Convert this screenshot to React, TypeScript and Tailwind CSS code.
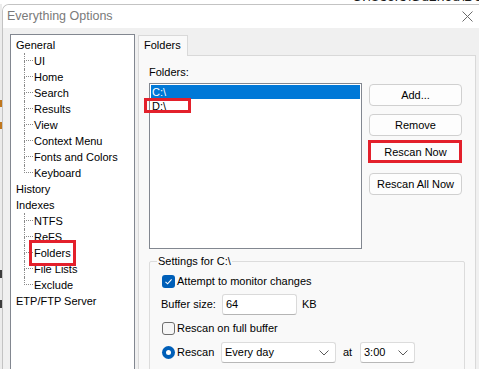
import React from 'react'

const font = "font-['Liberation_Sans',Arial,sans-serif]"

const generalChildren = ['UI', 'Home', 'Search', 'Results', 'View', 'Context Menu', 'Fonts and Colors', 'Keyboard']
const indexChildren = ['NTFS', 'ReFS', 'Folders', 'File Lists', 'Exclude']

const TreeRoot = ({ label }: { label: string }) => (
    <div className="h-[16px] leading-[16px] whitespace-nowrap">{label}</div>
)

const TreeChild = ({ label, last }: { label: string, last?: boolean }) => (
    <div className="flex h-[16px]">
        <div className="w-[8px] shrink-0" />
        <div className="w-[9px] shrink-0 flex flex-col">
            <div className="h-[8px] border-l border-b border-dotted border-[#8a8a8a]" />
            <div className={last ? 'h-[8px]' : 'h-[8px] border-l border-dotted border-[#8a8a8a]'} />
        </div>
        <span className="ml-[1px] leading-[16px] whitespace-nowrap">{label}</span>
    </div>
)

const Btn = ({ label, className }: { label: string, className?: string }) => (
    <button className={`h-[22px] w-[93px] rounded-[4px] border border-[#d0d0d0] bg-[#fdfdfd] text-[11px] text-black ${className ?? ''}`}>
        {label}
    </button>
)

const Chevron = () => (
    <svg width="10" height="6" viewBox="0 0 10 6" className="shrink-0">
        <path d="M0.5 0.5 L5 5 L9.5 0.5" fill="none" stroke="#5a5a5a" strokeWidth="1" />
    </svg>
)

const Select = ({ value, width }: { value: string, width: string }) => (
    <div className={`${width} h-[21px] flex items-center justify-between pl-[3px] pr-[6px] bg-white border border-[#dcdcdc] border-b-[#b8b8b8] rounded-[3px]`}>
        <span>{value}</span>
        <Chevron />
    </div>
)

export default function App() {
    return (
        <div className={`relative w-[479px] h-[369px] overflow-hidden bg-white text-[11px] text-black ${font}`}>
            {/* text of the window behind */}
            <div className="h-[4px] overflow-hidden bg-white">
                <div className="pl-[352px] -mt-[12px] text-[14px] leading-[16px] text-[#1a1a1a] whitespace-nowrap">
                    {'C:\\Users\\Gu2hou\\Dow'}
                </div>
            </div>
            <div className="flex h-[365px]">
                <div className="w-[2px] shrink-0 bg-[#ececec] flex flex-col">
                    <div className="h-[96px]" />
                    <div className="h-[7px] bg-[#c0771e]" />
                    <div className="h-[15px]" />
                    <div className="h-[7px] bg-[#c0771e]" />
                    <div className="h-[141px]" />
                    <div className="h-[8px] bg-[#3c3c3c]" />
                    <div className="h-[22px]" />
                    <div className="h-[8px] bg-[#3c3c3c]" />
                </div>
                <div className="flex-1 flex flex-col border-l border-t border-[#c3c3c3] rounded-tl-[7px] overflow-hidden">
                    {/* title bar */}
                    <div className="h-[23px] shrink-0 bg-white flex items-center justify-between pl-[4px] pr-[6px]">
                        <span className="text-[12.5px] text-[#7a7a7a]">Everything Options</span>
                        <svg width="11" height="11" viewBox="0 0 11 11">
                            <path d="M0.5 0.5 L10.5 10.5 M10.5 0.5 L0.5 10.5" stroke="#6b6b6b" strokeWidth="1" />
                        </svg>
                    </div>
                    {/* body */}
                    <div className="flex-1 bg-[#f0f0f0] flex pt-[6px] pl-[7px] pr-[3px] gap-[3px]">
                        <div className="w-[125px] shrink-0 bg-white border border-[#828790] pt-[2px] pl-[5px]">
                            <TreeRoot label="General" />
                            {generalChildren.map((c, i) => (
                                <TreeChild key={c} label={c} last={i === generalChildren.length - 1} />
                            ))}
                            <TreeRoot label="History" />
                            <TreeRoot label="Indexes" />
                            {indexChildren.map((c, i) => (
                                <TreeChild key={c} label={c} last={i === indexChildren.length - 1} />
                            ))}
                            <TreeRoot label="ETP/FTP Server" />
                        </div>
                        <div className="flex-1 flex flex-col pt-[1px]">
                            <div className="flex">
                                <div className="relative z-10 -mb-px w-[50px] h-[21px] border-t border-l border-r border-[#d9d9d9] bg-[#f9f9f9] pl-[5px] leading-[18px]">
                                    Folders
                                </div>
                            </div>
                            <div className="flex-1 bg-[#f9f9f9] border border-[#d9d9d9] pl-[10px] pt-[10px]">
                                <div className="leading-[13px]">Folders:</div>
                                <div className="flex mt-[4px]">
                                    <div className="w-[213px] h-[166px] bg-white border border-[#828790] p-[1px]">
                                        <div className="h-[14px] bg-[#0078d7] text-white pl-[1px] leading-[14px]">{'C:\\'}</div>
                                        <div className="h-[14px] pl-[1px] leading-[14px]">{'D:\\'}</div>
                                    </div>
                                    <div className="flex flex-col ml-[7px] mt-[1px]">
                                        <Btn label="Add..." />
                                        <Btn label="Remove" className="mt-[8px]" />
                                        <Btn label="Rescan Now" className="mt-[5px]" />
                                        <Btn label="Rescan All Now" className="mt-[10px]" />
                                    </div>
                                </div>
                                <fieldset className="mt-[6px] w-[316px] border border-[#dcdcdc] rounded-[2px]">
                                    <legend className="ml-[7px] px-[1px] leading-[13px]">{'Settings for C:\\'}</legend>
                                    <div className="pl-[12px] pt-[5px] pb-[8px]">
                                        <div className="flex items-center h-[16px] gap-[2px]">
                                            <div className="w-[13px] h-[13px] rounded-[3px] bg-[#005fb8] flex items-center justify-center">
                                                <svg width="9" height="9" viewBox="0 0 9 9">
                                                    <path d="M1.5 4.8 L3.6 6.8 L7.6 2.4" fill="none" stroke="white" strokeWidth="1.1" />
                                                </svg>
                                            </div>
                                            <span>Attempt to monitor changes</span>
                                        </div>
                                        <div className="flex items-center h-[21px] mt-[5px] -ml-[1px]">
                                            <span className="w-[61px]">Buffer size:</span>
                                            <div className="w-[75px] h-[21px] bg-white border border-[#dadada] border-b-[#b5b5b5] rounded-[3px] pl-[3px] leading-[19px]">64</div>
                                            <span className="ml-[5px]">KB</span>
                                        </div>
                                        <div className="flex items-center h-[16px] mt-[5px] gap-[2px]">
                                            <div className="w-[13px] h-[13px] rounded-[3px] bg-[#f6f6f6] border border-[#6e6e6e]" />
                                            <span>Rescan on full buffer</span>
                                        </div>
                                        <div className="flex items-center h-[21px] mt-[6px]">
                                            <div className="w-[59px] flex items-center gap-[2px]">
                                                <div className="w-[13px] h-[13px] rounded-full bg-[#005fb8] flex items-center justify-center">
                                                    <div className="w-[5px] h-[5px] rounded-full bg-white" />
                                                </div>
                                                <span>Rescan</span>
                                            </div>
                                            <Select value="Every day" width="w-[115px]" />
                                            <span className="w-[17px] ml-[7px]">at</span>
                                            <Select value="3:00" width="w-[55px]" />
                                        </div>
                                    </div>
                                </fieldset>
                            </div>
                        </div>
                    </div>
                </div>
            </div>
            {/* red annotation boxes */}
            <div className="absolute left-[29px] top-[240px] w-[47px] h-[26px] border-[3px] border-[#e3202b]" />
            <div className="absolute left-[144px] top-[98px] w-[47px] h-[15px] border-[3px] border-[#e3202b]" />
            <div className="absolute left-[368px] top-[140px] w-[94px] h-[23px] border-[3px] border-[#e3202b]" />
        </div>
    )
}
